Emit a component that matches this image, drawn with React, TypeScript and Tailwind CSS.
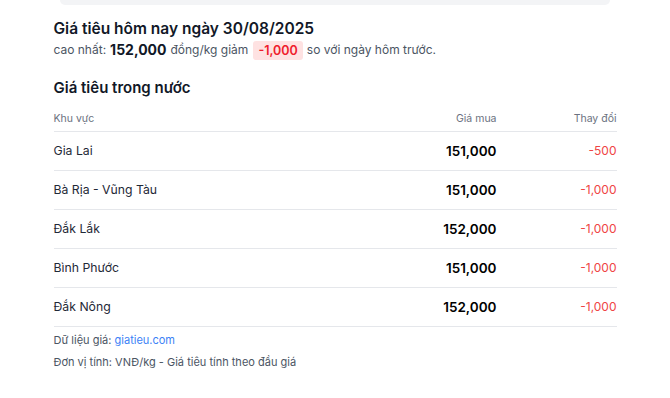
import React from 'react'

const ROWS = [
  { region: 'Gia Lai', price: '151,000', change: '-500' },
  { region: 'Bà Rịa - Vũng Tàu', price: '151,000', change: '-1,000' },
  { region: 'Đắk Lắk', price: '152,000', change: '-1,000' },
  { region: 'Bình Phước', price: '151,000', change: '-1,000' },
  { region: 'Đắk Nông', price: '152,000', change: '-1,000' },
]

export default function App() {
  return (
    <div className="min-h-[398px] bg-white font-['Inter',sans-serif] text-[#111827]">
      {/* bottom edge of the card above */}
      <div className="mx-auto h-[5px] w-[550px] rounded-b-xl bg-[#f3f4f6]" />

      <div className="mx-auto w-[563px] pt-[14px]">
        <h1 className="text-[15.5px] font-semibold leading-[20px]">Giá tiêu hôm nay ngày 30/08/2025</h1>
        <p className="mt-[1px] flex items-center text-[12px] leading-[20px] text-[#4b5563]">
          <span>cao nhất:</span>
          <span className="ml-[4px] text-[14px] font-bold text-[#111827]">152,000</span>
          <span className="ml-[4px]">đồng/kg giảm</span>
          <span className="ml-[5px] rounded-[3px] bg-[#fee2e2] px-[5px] text-[12.5px] font-semibold leading-[19px] text-[#ef1c2c]">-1,000</span>
          <span className="ml-[4px]">so với ngày hôm trước.</span>
        </p>

        <h2 className="mt-[18px] text-[15px] font-semibold leading-[20px]">Giá tiêu trong nước</h2>

        <table className="mt-[6px] w-full border-collapse">
          <thead>
            <tr className="border-b border-[#e5e7eb] text-[10.5px] text-[#6b7280]">
              <th className="h-[27px] pt-[4px] text-left font-normal">Khu vực</th>
              <th className="pt-[4px] text-right font-normal">Giá mua</th>
              <th className="w-[120px] pt-[4px] text-right font-normal">Thay đổi</th>
            </tr>
          </thead>
          <tbody>
            {ROWS.map(r => (
              <tr key={r.region} className="border-b border-[#e5e7eb]">
                <td className="h-[39px] pt-[1px] text-[12.25px] text-[#1f2937]">{r.region}</td>
                <td className="pt-[1px] text-right text-[13.5px] font-semibold text-black">{r.price}</td>
                <td className="pt-[1px] text-right text-[12px] text-[#ef4444]">{r.change}</td>
              </tr>
            ))}
          </tbody>
        </table>

        <p className="mt-[4px] text-[11px] leading-[18px] text-[#4b5563]">
          Dữ liệu giá: <span className="text-[#3b82f6]">giatieu.com</span>
        </p>
        <p className="mt-[4px] text-[11px] leading-[18px] text-[#4b5563]">Đơn vị tính: VNĐ/kg - Giá tiêu tính theo đầu giá</p>
      </div>
    </div>
  )
}
